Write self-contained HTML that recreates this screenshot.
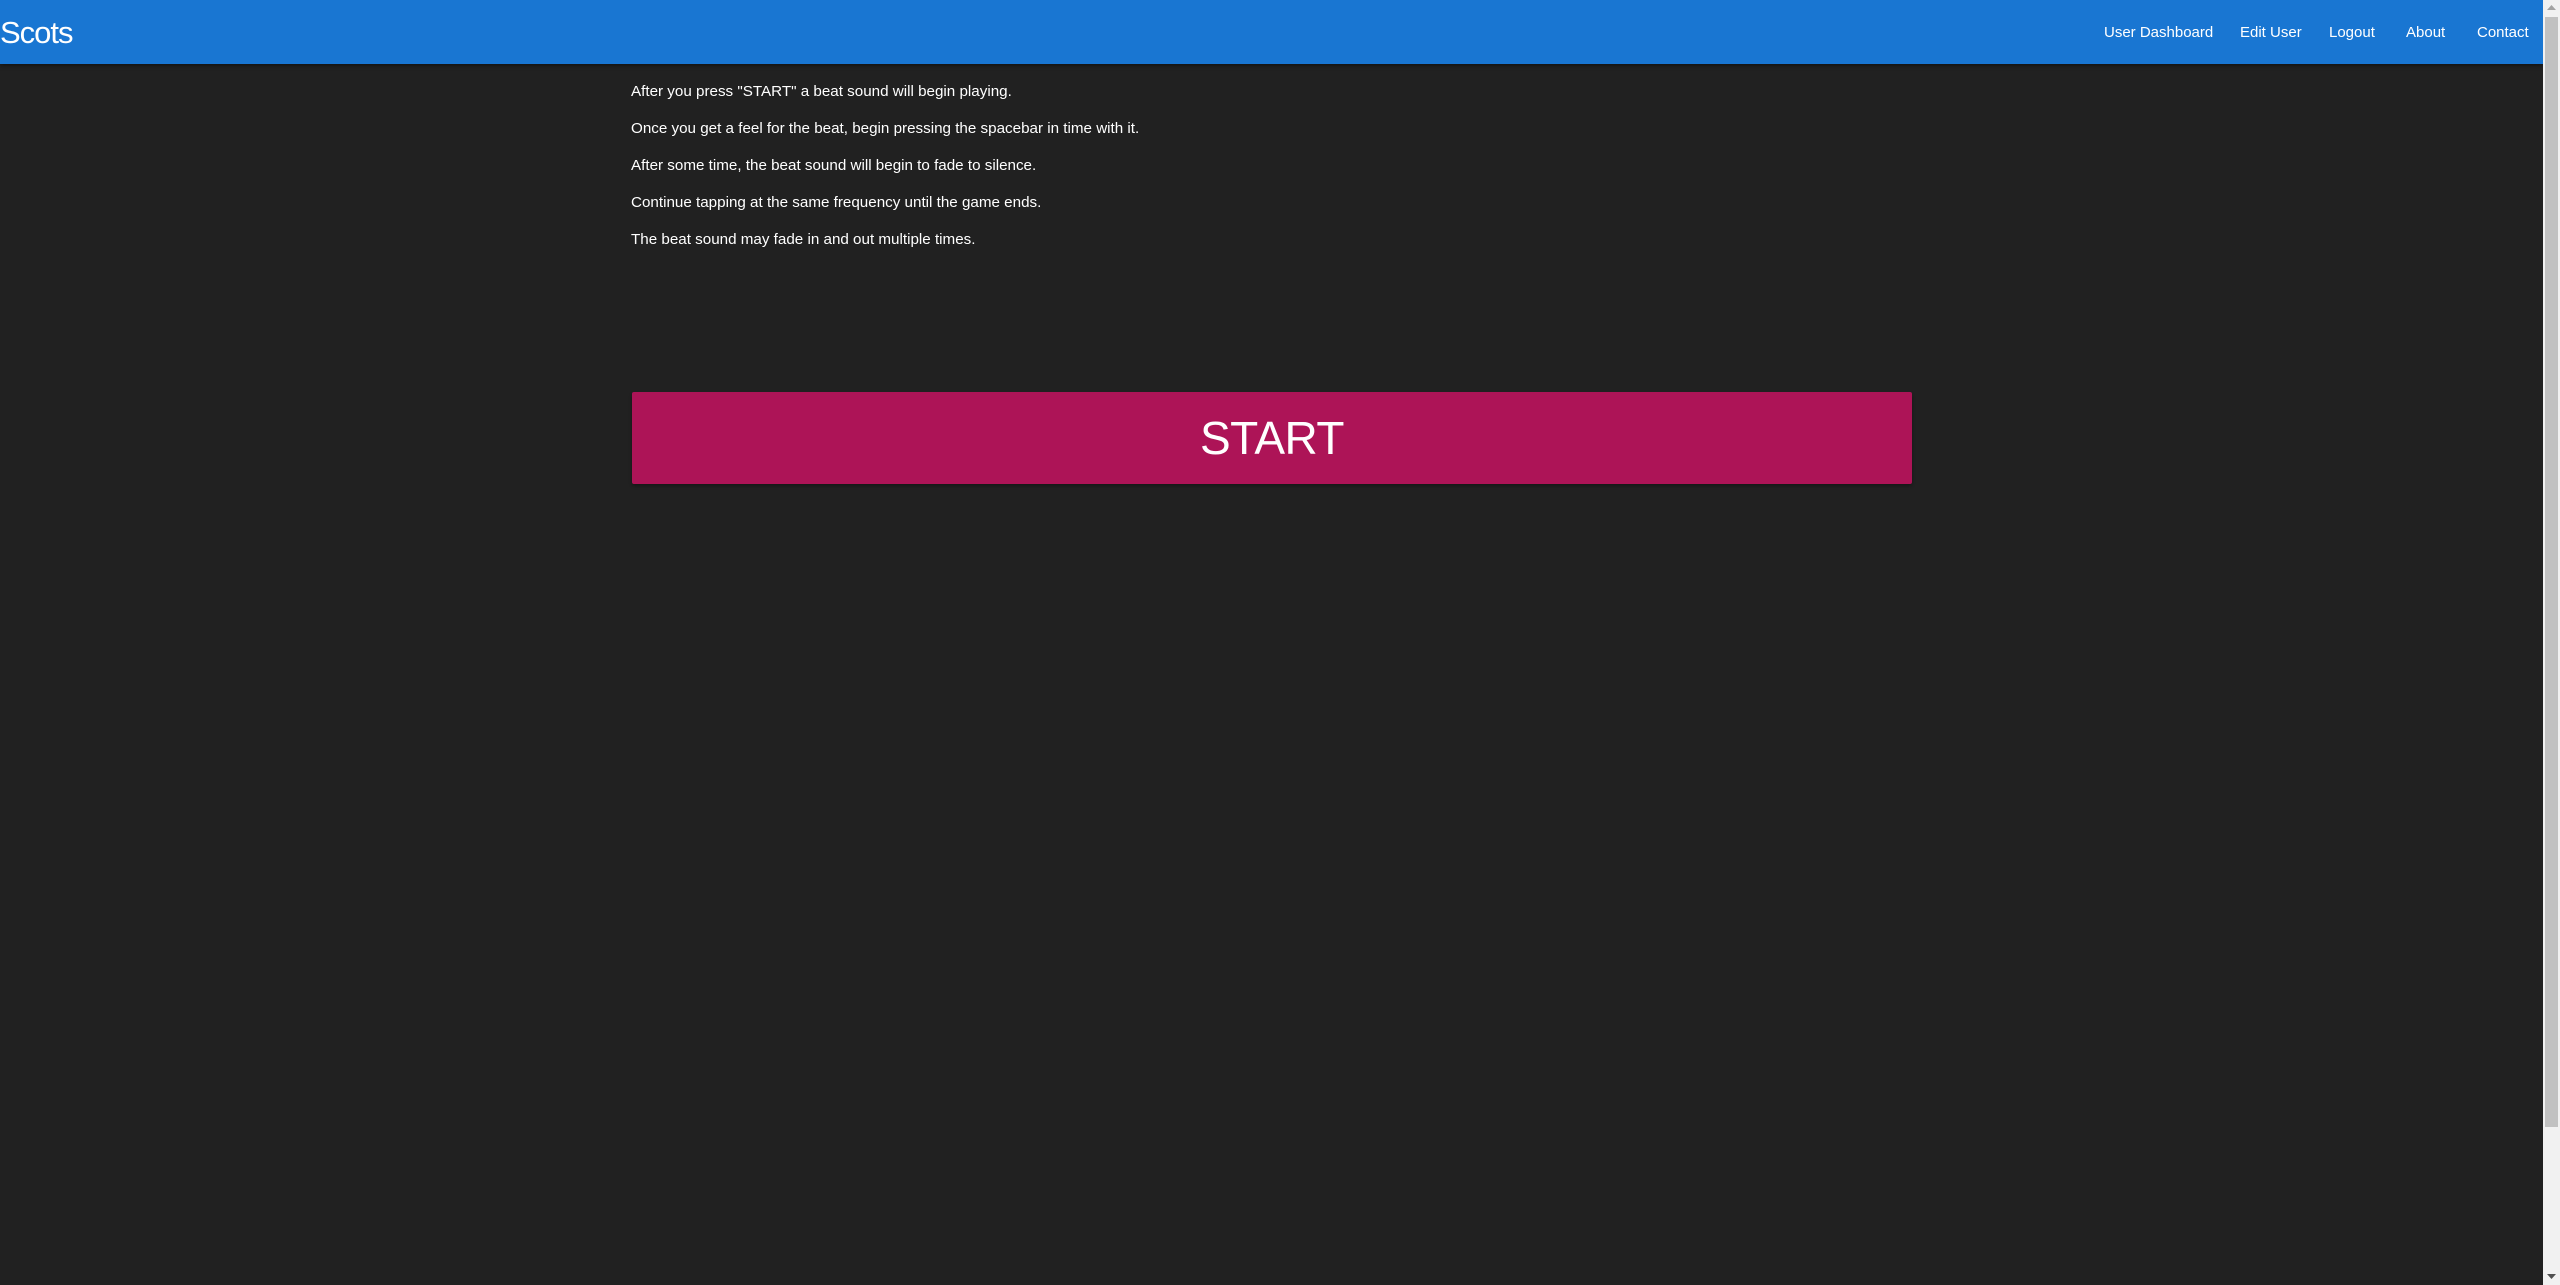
<!DOCTYPE html>
<html><head><meta charset="utf-8"><style>
html,body{margin:0;padding:0;}
body{width:2560px;height:1285px;background:#212121;font-family:"Liberation Sans",sans-serif;color:#fff;position:relative;overflow:hidden;}
.nav{position:absolute;left:0;top:0;width:2543px;height:64px;background:#1976d2;box-shadow:0 2px 4px rgba(0,0,0,.4);}
.brand{position:absolute;left:0;top:14px;font-size:31px;line-height:38px;letter-spacing:-1px;}
.links a{position:absolute;top:24px;font-size:15px;line-height:18px;color:#fff;text-decoration:none;white-space:nowrap;}
.p{position:absolute;left:631px;font-size:15.2px;line-height:18px;white-space:nowrap;}
.btn{position:absolute;left:632px;top:392px;width:1280px;height:92px;background:#ad1457;border-radius:2px;box-shadow:0 2px 3px rgba(0,0,0,.3);text-align:center;font-size:46px;line-height:92px;letter-spacing:-0.5px;}
.sb{position:absolute;left:2543px;top:0;width:17px;height:1285px;background:#f1f1f1;}
.thumb{position:absolute;left:2545px;top:17px;width:13px;height:1110px;background:#c1c1c1;}
</style></head><body>
<div class="nav"><div class="brand">Scots</div>
<div class="links">
<a style="left:2104px">User Dashboard</a>
<a style="left:2240px">Edit User</a>
<a style="left:2329px">Logout</a>
<a style="left:2406px">About</a>
<a style="left:2477px">Contact</a>
</div></div>
<div class="p" style="top:83px">After you press "START" a beat sound will begin playing.</div>
<div class="p" style="top:120px">Once you get a feel for the beat, begin pressing the spacebar in time with it.</div>
<div class="p" style="top:157px">After some time, the beat sound will begin to fade to silence.</div>
<div class="p" style="top:194px">Continue tapping at the same frequency until the game ends.</div>
<div class="p" style="top:231px">The beat sound may fade in and out multiple times.</div>
<div class="btn">START</div>
<div class="sb"></div><div class="thumb"></div>
<svg style="position:absolute;left:2547px;top:5px" width="9" height="6"><polygon points="0,5 4.5,0 9,5" fill="#a3a3a3"/></svg>
<svg style="position:absolute;left:2547px;top:1274px" width="9" height="6"><polygon points="0,0 4.5,5 9,0" fill="#505050"/></svg>
</body></html>
